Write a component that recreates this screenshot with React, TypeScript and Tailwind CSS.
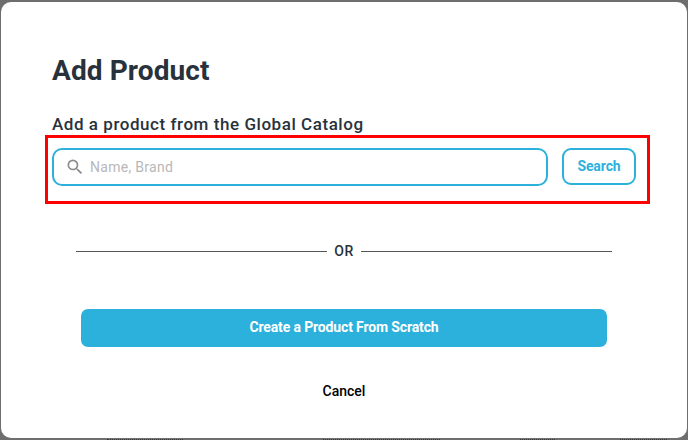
const font = { fontFamily: 'Roboto, sans-serif' }

export default function App() {
  return (
    <div className="w-[688px] h-[440px] overflow-hidden bg-[#6e6e6e] pt-[2px] pl-[1px]" style={font}>
      <div className="w-[686px] h-[436px] bg-white rounded-[10px] flex flex-col">
        <h1 className="ml-[51px] mt-[51px] text-[28px] leading-[36px] font-bold tracking-[0.1px] text-[#28323c]">Add Product</h1>
        <h2 className="ml-[51px] mt-[23px] text-[17px] leading-[24px] font-medium tracking-[0.55px] text-[#28323c]">Add a product from the Global Catalog</h2>

        <div className="ml-[44px] mt-[-1px] w-[605px] h-[69px] border-[3px] border-[#ff0000] flex items-start gap-[14px] pl-[4px] pt-[10px]">
          <div className="w-[496px] h-[38px] rounded-[10px] border-2 border-[#2cb1dc] flex items-center pl-[11px]">
            <svg viewBox="0 0 24 24" className="w-[20px] h-[20px] fill-[#8c8c8c]">
              <path d="M15.5 14h-.79l-.28-.27A6.471 6.471 0 0 0 16 9.5 6.5 6.5 0 1 0 9.5 16c1.61 0 3.09-.59 4.23-1.57l.27.28v.79l5 4.99L20.49 19l-4.99-5zm-6 0C7.01 14 5 11.99 5 9.5S7.01 5 9.5 5 14 7.01 14 9.5 11.99 14 9.5 14z" />
            </svg>
            <span className="ml-[5px] text-[14px] tracking-[0.3px] text-[#b8b8b8]">Name, Brand</span>
          </div>
          <button className="w-[74px] h-[37px] rounded-[9px] border-2 border-[#2cb1dc] text-[14px] font-bold tracking-[-0.1px] text-[#2cb1dc]">Search</button>
        </div>

        <div className="ml-[75px] mt-[39px] w-[536px] flex items-center">
          <div className="flex-1 h-[1px] bg-[#555555]" />
          <span className="mx-[7px] text-[14px] leading-[16px] font-medium tracking-[0.6px] text-[#28323c]">OR</span>
          <div className="flex-1 h-[1px] bg-[#555555]" />
        </div>

        <button className="ml-[80px] mt-[50px] w-[526px] h-[38px] pb-[2px] rounded-[7px] bg-[#2cb1dc] text-[14px] font-bold tracking-[-0.14px] text-white">Create a Product From Scratch</button>
        <button className="mt-[34px] text-[14px] leading-[20px] font-medium text-black">Cancel</button>
      </div>
      {/* table text behind the dialog, only its tips show below the edge */}
      <div className="flex mt-[1px] ml-[106px]">
        <div className="w-[76px] border-t-[1px] border-dotted border-[#3a3a3a]" />
        <div className="ml-[140px] w-[117px] border-t-[1px] border-dotted border-[#3a3a3a]" />
        <div className="ml-[80px] w-[35px] border-t-[1px] border-dotted border-[#3a3a3a]" />
        <div className="ml-[65px] w-[47px] border-t-[1px] border-dotted border-[#3a3a3a]" />
      </div>
    </div>
  )
}
